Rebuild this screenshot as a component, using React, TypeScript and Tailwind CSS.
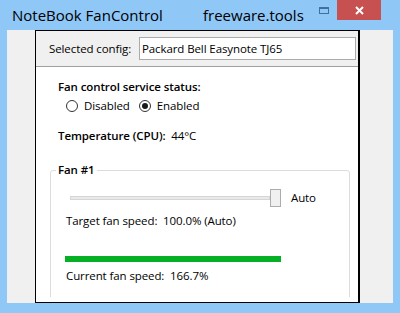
function Radio({ checked, label }: { checked?: boolean; label: string }) {
  return (
    <div className="flex items-center">
      <div className="flex h-[12px] w-[12px] items-center justify-center rounded-full border border-[#333] bg-white">
        {checked && <div className="h-[6px] w-[6px] rounded-full bg-[#1a1a1a]" />}
      </div>
      <span className="ml-[6px]">{label}</span>
    </div>
  );
}

export default function App() {
  return (
    <div className="flex h-[313px] w-[400px] flex-col bg-[#8fc7f7] font-['Open_Sans',sans-serif] text-[11.5px] leading-[16px] tracking-[-0.1px] text-black">
      {/* title bar */}
      <div className="flex h-[30px] shrink-0 items-start tracking-normal">
        <div className="w-[203px] pl-[12px] pt-[5px] text-[15px] leading-[20px]">NoteBook FanControl</div>
        <div className="w-[116px] pt-[5px] text-[15px] leading-[20px]">freeware.tools</div>
        <div className="w-[18px] pt-[7px]">
          <div className="h-[7px] w-[10px] border border-t-2 border-[#40709c]" />
        </div>
        <div className="flex h-[20px] w-[44px] items-center justify-center bg-[#c75050]">
          <svg width="9" height="9" viewBox="0 0 9 9">
            <path d="M1 1 L8 8 M8 1 L1 8" stroke="white" strokeWidth="2" />
          </svg>
        </div>
      </div>

      {/* client area */}
      <div className="mx-[7px] flex h-[273px] shrink-0 bg-[#f0f0f0] pl-[28px]">
        <div className="flex h-full w-[325px] flex-col overflow-hidden border border-r-2 border-black">
          <div className="flex h-[36px] shrink-0 items-center border-b border-[#a0a0a0] bg-[#f0f0f0] pl-[13px]">
            <span className="w-[90px] whitespace-nowrap">Selected config:</span>
            <div className="flex h-[23px] w-[217px] items-center border border-[#ababab] bg-white pl-[2px]">
              Packard Bell Easynote TJ65
            </div>
          </div>

          <div className="flex min-h-0 flex-1 flex-col bg-white pb-[5px]">
            <div className="min-h-0 flex-1 overflow-hidden">
              <div className="pl-[22px] pt-[12px] font-semibold">Fan control service status:</div>
              <div className="mt-[3px] flex items-center gap-[9px] pl-[30px]">
                <Radio label="Disabled" />
                <Radio checked label="Enabled" />
              </div>
              <div className="mt-[14px] flex whitespace-pre pl-[22px]">
                <span className="font-semibold">Temperature (CPU):</span>
                <span>  44°C</span>
              </div>

              <fieldset className="ml-[14px] mr-[8px] mt-[18px] h-[160px] rounded-[3px] border border-[#dcdcdc]">
                <legend className="ml-[5px] px-[2px] font-semibold">Fan #1</legend>
                <div className="mt-[11px] flex h-[18px] items-center pl-[19px]">
                  <div className="h-[4px] w-[200px] border border-[#d6d6d6] bg-[#e7eaea]" />
                  <div className="h-[18px] w-[11px] border border-[#acacac] bg-[#f0f0f0]" />
                  <span className="ml-[10px]">Auto</span>
                </div>
                <div className="mt-[6px] whitespace-pre pl-[15px]">Target fan speed:  100.0% (Auto)</div>
                <div className="ml-[14px] mt-[27px] h-[6px] w-[216px] bg-[#06b025]" />
                <div className="mt-[6px] whitespace-pre pl-[15px]">Current fan speed:  166.7%</div>
              </fieldset>
            </div>
          </div>
        </div>
      </div>
    </div>
  );
}
